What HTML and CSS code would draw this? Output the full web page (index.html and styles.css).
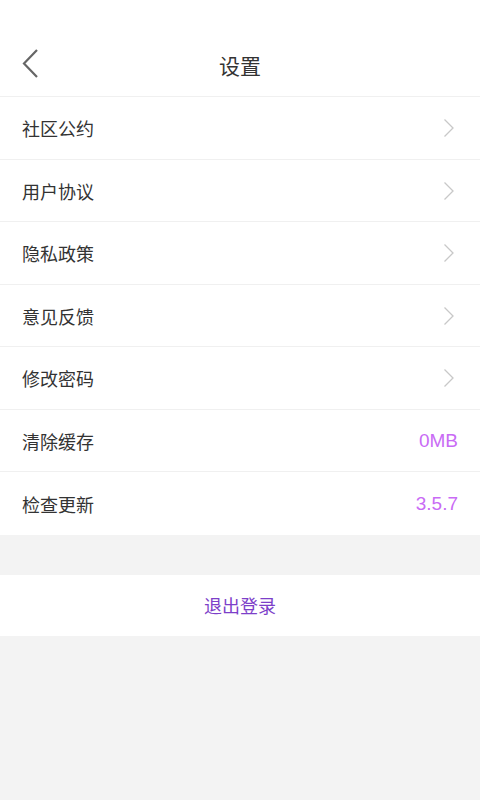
FILE: index.html
```html
<!DOCTYPE html>
<html lang="zh">
<head>
<meta charset="utf-8">
<title>设置</title>
<link rel="stylesheet" href="styles.css">
</head>
<body>
<div class="page">
  <header class="header">
    <span class="back">
      <svg width="20" height="32" viewBox="0 0 20 32"><polyline points="16,3 3,16.5 16,30" fill="none" stroke="#666" stroke-width="2.2"/></svg>
    </span>
    <h1 class="title">设置</h1>
  </header>
  <ul class="list">
    <li class="row"><span class="label">社区公约</span><svg class="chev" width="12" height="20" viewBox="0 0 12 20"><polyline points="1.5,1.5 10,10 1.5,18.5" fill="none" stroke="#c8c8c8" stroke-width="1.3"/></svg></li>
    <li class="row"><span class="label">用户协议</span><svg class="chev" width="12" height="20" viewBox="0 0 12 20"><polyline points="1.5,1.5 10,10 1.5,18.5" fill="none" stroke="#c8c8c8" stroke-width="1.3"/></svg></li>
    <li class="row"><span class="label">隐私政策</span><svg class="chev" width="12" height="20" viewBox="0 0 12 20"><polyline points="1.5,1.5 10,10 1.5,18.5" fill="none" stroke="#c8c8c8" stroke-width="1.3"/></svg></li>
    <li class="row"><span class="label">意见反馈</span><svg class="chev" width="12" height="20" viewBox="0 0 12 20"><polyline points="1.5,1.5 10,10 1.5,18.5" fill="none" stroke="#c8c8c8" stroke-width="1.3"/></svg></li>
    <li class="row"><span class="label">修改密码</span><svg class="chev" width="12" height="20" viewBox="0 0 12 20"><polyline points="1.5,1.5 10,10 1.5,18.5" fill="none" stroke="#c8c8c8" stroke-width="1.3"/></svg></li>
    <li class="row"><span class="label">清除缓存</span><span class="value">0MB</span></li>
    <li class="row last"><span class="label">检查更新</span><span class="value">3.5.7</span></li>
  </ul>
  <div class="logout">退出登录</div>
</div>
</body>
</html>
```

FILE: styles.css
```css
html, body {
  margin: 0;
  padding: 0;
  background: #f3f3f3;
}
body {
  font-family: "Noto Sans CJK SC", "Noto Sans", sans-serif;
  color: #333;
}
.page {
  width: 480px;
  min-height: 800px;
  background: #f3f3f3;
}
.header {
  height: 97px;
  box-sizing: border-box;
  background: #fff;
  border-bottom: 1px solid #f0f0f0;
  display: flex;
  align-items: center;
  justify-content: center;
  padding-top: 34px;
  position: relative;
}
.back {
  position: absolute;
  left: 21px;
  top: 47px;
  display: flex;
}
.title {
  margin: 0;
  font-size: 21px;
  font-weight: normal;
  color: #333;
  line-height: 1;
}
.list {
  list-style: none;
  margin: 0;
  padding: 0;
  background: #fff;
}
.row {
  box-sizing: border-box;
  height: 62.5px;
  border-bottom: 1px solid #f0f0f0;
  display: flex;
  align-items: center;
  justify-content: space-between;
  padding: 1px 22px 0 22px;
}
.row.last {
  border-bottom: none;
}
.label {
  font-size: 18px;
  color: #333;
}
.chev {
  margin-right: 3px;
}
.value {
  font-family: "Liberation Sans", Arial, sans-serif;
  font-size: 19px;
  color: #c96bf5;
}
.logout {
  margin-top: 40px;
  height: 61px;
  background: #fff;
  display: flex;
  align-items: center;
  justify-content: center;
  font-size: 18px;
  color: #7d3fc9;
}
```
